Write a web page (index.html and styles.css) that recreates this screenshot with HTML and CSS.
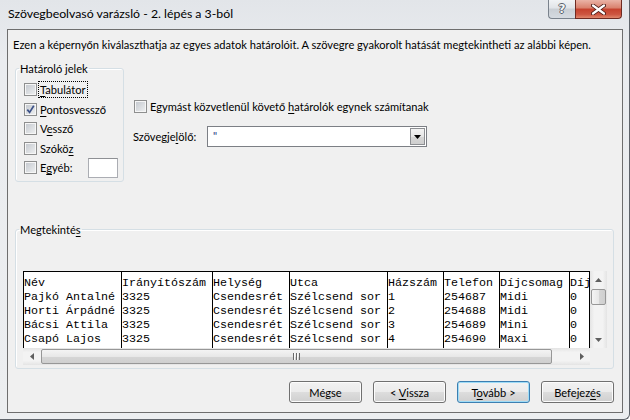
FILE: index.html
```html
<!DOCTYPE html>
<html lang="hu">
<head>
<meta charset="utf-8">
<title>Szövegbeolvasó varázsló</title>
<link rel="stylesheet" href="styles.css">
</head>
<body>
<div class="window">
  <div class="titlebar">
    <span class="title">Szövegbeolvasó varázsló - 2. lépés a 3-ból</span>
    <div class="caption">
      <div class="cap-btn help"><span class="help-glyph">?</span></div>
      <div class="cap-btn close">
        <svg width="15" height="11" viewBox="0 0 15 11"><path d="M2 1.5 L13 9.5 M13 1.5 L2 9.5" stroke="#4a1a14" stroke-width="4" stroke-linecap="round"/><path d="M2 1.5 L13 9.5 M13 1.5 L2 9.5" stroke="#ffffff" stroke-width="2.2" stroke-linecap="round"/></svg>
      </div>
    </div>
  </div>
  <div class="client">
    <p class="intro">Ezen a képernyőn kiválaszthatja az egyes adatok határolóit. A szövegre gyakorolt hatását megtekintheti az alábbi képen.</p>
    <div class="top">
      <fieldset class="group delims">
        <legend>Határoló jelek</legend>
        <div class="checks">
          <div class="check"><span class="cb"></span><span class="lbl focus"><u>T</u>abulátor</span></div>
          <div class="check"><span class="cb"><svg width="9" height="9" viewBox="0 0 9 9"><path d="M1.3 4.6 L3.6 7.4 L7.8 0.8" fill="none" stroke="#3d5288" stroke-width="1.7"/></svg></span><span class="lbl"><u>P</u>ontosvessző</span></div>
          <div class="check"><span class="cb"></span><span class="lbl">V<u>e</u>ssző</span></div>
          <div class="check"><span class="cb"></span><span class="lbl">Szókö<u>z</u></span></div>
          <div class="check"><span class="cb"></span><span class="lbl">E<u>g</u>yéb:</span><span class="textbox"></span></div>
        </div>
      </fieldset>
      <div class="options">
        <div class="check"><span class="cb"></span><span class="lbl">Egymást közvetlenül követő <u>h</u>atárolók egynek számítanak</span></div>
        <div class="qualifier">
          <span class="qlabel">Szövegje<u>l</u>ölő:</span>
          <div class="combo">
            <span class="combo-val">"</span>
            <span class="combo-btn"><svg width="7" height="4" viewBox="0 0 7 4"><path d="M0 0 H7 L3.5 4 Z" fill="#000"/></svg></span>
          </div>
        </div>
      </div>
    </div>
    <fieldset class="group preview">
      <legend>Megtekinté<u>s</u></legend>
      <div class="preview-body">
        <div class="grid">
          <div class="col w98"><div>Név</div><div>Pajkó Antalné</div><div>Horti Árpádné</div><div>Bácsi Attila</div><div>Csapó Lajos</div></div>
          <div class="col w91"><div>Irányítószám</div><div>3325</div><div>3325</div><div>3325</div><div>3325</div></div>
          <div class="col w77"><div>Helység</div><div>Csendesrét</div><div>Csendesrét</div><div>Csendesrét</div><div>Csendesrét</div></div>
          <div class="col w98"><div>Utca</div><div>Szélcsend sor</div><div>Szélcsend sor</div><div>Szélcsend sor</div><div>Szélcsend sor</div></div>
          <div class="col w56"><div>Házszám</div><div>1</div><div>2</div><div>3</div><div>4</div></div>
          <div class="col w56"><div>Telefon</div><div>254687</div><div>254688</div><div>254689</div><div>254690</div></div>
          <div class="col w70"><div>Díjcsomag</div><div>Midi</div><div>Midi</div><div>Mini</div><div>Maxi</div></div>
          <div class="col wlast"><div>Díj</div><div>0</div><div>0</div><div>0</div><div>0</div></div>
        </div>
        <div class="vscroll">
          <span class="arrow-v"><svg width="7" height="4" viewBox="0 0 7 4"><path d="M0 4 H7 L3.5 0 Z" fill="#5f5f5f"/></svg></span>
          <span class="vthumb"></span>
          <span class="vtrack"></span>
          <span class="arrow-v"><svg width="7" height="4" viewBox="0 0 7 4"><path d="M0 0 H7 L3.5 4 Z" fill="#5f5f5f"/></svg></span>
        </div>
        <div class="hscroll">
          <span class="arrow-h"><svg width="4" height="7" viewBox="0 0 4 7"><path d="M4 0 V7 L0 3.5 Z" fill="#5f5f5f"/></svg></span>
          <span class="hthumb"><span class="grip"></span></span>
          <span class="htrack"></span>
          <span class="arrow-h"><svg width="4" height="7" viewBox="0 0 4 7"><path d="M0 0 V7 L4 3.5 Z" fill="#5f5f5f"/></svg></span>
        </div>
        <div class="corner"></div>
      </div>
    </fieldset>
    <div class="buttons">
      <button class="btn">Mégse</button>
      <button class="btn">&lt; <u>V</u>issza</button>
      <button class="btn default">T<u>o</u>vább &gt;</button>
      <button class="btn">Befejez<u>é</u>s</button>
    </div>
  </div>
</div>
</body>
</html>
```

FILE: styles.css
```css
* { box-sizing: border-box; }
html, body { margin: 0; padding: 0; }
body {
  width: 630px;
  height: 420px;
  overflow: hidden;
  background: #ffffff;
  font-family: "Lato", "Noto Sans", sans-serif;
  font-size: 11.1px;
  color: #000;
}
u { text-decoration: underline; text-underline-offset: 2px; }

.window {
  width: 630px;
  height: 420px;
  display: flex;
  flex-direction: column;
  padding: 0 6px 6px 7px;
  background: linear-gradient(#e2e5e9, #eaecef 60px, #eceef0);
  border-right: 1px solid #5e636a;
  border-bottom: 1px solid #5e636a;
  border-bottom-right-radius: 6px;
}

.titlebar {
  height: 29px;
  flex: none;
  display: flex;
  justify-content: space-between;
  align-items: flex-start;
}
.title { padding: 6px 0 0 1px; line-height: 16px; font-size: 12.3px; }
.caption { display: flex; margin-right: 1px; }
.cap-btn {
  height: 19px;
  display: flex;
  align-items: center;
  justify-content: center;
}
.help {
  width: 27px;
  border: 1px solid #7a828c;
  border-top: 0;
  border-right: 0;
  border-bottom-left-radius: 4px;
  background: linear-gradient(#f1f3f5, #e1e4e8 45%, #c9ced4 50%, #d6dbe1);
}
.help-glyph {
  font-family: "DejaVu Sans", sans-serif;
  font-weight: bold;
  font-size: 12px;
  line-height: 12px;
  color: #f4f4f4;
  text-shadow: 1px 0 #59616b, -1px 0 #59616b, 0 1px #59616b, 0 -1px #59616b;
}
.close {
  width: 47px;
  border: 1px solid #6f2b22;
  border-top: 0;
  border-bottom-right-radius: 4px;
  background: linear-gradient(#eab3a6, #d9806c 45%, #c5412d 50%, #cd5641 80%, #e0876c);
}

.client {
  flex: 1;
  border: 1px solid #6e6e6e;
  background: #f0f0f0;
  display: flex;
  flex-direction: column;
}
.intro { margin: 7px 0 0 5px; line-height: 15px; white-space: nowrap; }

.top { display: flex; margin-top: 9px; }

.group {
  margin: 0 0 0 7px;
  padding: 0;
  border: 1px solid #d5dfe5;
  border-radius: 3px;
  box-shadow: inset 1px 1px 0 #fff;
  min-width: 0;
}
.group legend { padding: 0 1px; margin-left: 3px; line-height: 15px; }

.delims { width: 109px; }
.checks { padding: 3.75px 5px 3.75px 8px; display: flex; flex-direction: column; }
.check { display: flex; align-items: center; height: 19.5px; }
.cb {
  width: 13px;
  height: 13px;
  flex: none;
  border: 1px solid #8e8f8f;
  padding: 1px;
  background: linear-gradient(135deg, #c6cad0, #eceeef) content-box, #f6f6f6;
  display: flex;
  align-items: center;
  justify-content: center;
}
.lbl {
  margin-left: 1px;
  padding: 0 1px;
  border: 1px dotted transparent;
  line-height: 15px;
  white-space: nowrap;
}
.lbl.focus { border-color: #000; }
.textbox {
  margin-left: auto;
  width: 30px;
  height: 20px;
  background: #fff;
  border: 1px solid #abadb3;
  border-top-color: #8e9094;
}

.options { margin-left: 9px; padding-top: 38px; }
.options .check { height: 15px; }
.options .cb { margin-left: 1px; }
.options .lbl { margin-left: 1px; border: 0; padding: 0 0 0 2px; }
.qualifier { display: flex; align-items: center; margin-top: 12px; }
.qlabel { width: 74px; line-height: 15px; }
.combo {
  width: 220px;
  height: 21px;
  background: #fff;
  border: 1px solid #7c7f85;
  display: flex;
  align-items: stretch;
  padding: 1px;
}
.combo-val { flex: 1; padding-left: 4px; line-height: 15px; color: #1e3582; }
.combo-btn {
  width: 15px;
  border: 1px solid #8d8f93;
  background: linear-gradient(#f3f3f3, #e6e6e6 50%, #d6d6d6 51%, #cfcfcf);
  display: flex;
  align-items: center;
  justify-content: center;
}

.preview { width: 599px; margin-top: 40px; }
.preview-body {
  display: grid;
  grid-template-columns: 567px 17px;
  grid-template-rows: 77px 17px;
  margin: 34px 0 0 7px;
  padding-bottom: 3px;
}
.grid {
  display: flex;
  background: #fff;
  border-top: 1px solid #000;
  border-right: 1px solid #000;
  overflow: hidden;
  font-family: "Liberation Mono", monospace;
  font-size: 11.66px;
  line-height: 14px;
  white-space: pre;
}
.col { flex: none; border-left: 1px solid #000; padding-top: 4px; overflow: hidden; }
.w98 { width: 98px; }
.w91 { width: 91px; }
.w77 { width: 77px; }
.w56 { width: 56px; }
.w70 { width: 70px; }
.wlast { flex: 1 1 auto; min-width: 0; }

.vscroll {
  display: flex;
  flex-direction: column;
  background: linear-gradient(90deg, #e4e4e4, #f3f3f3 25%, #f3f3f3 75%, #e4e4e4);
}
.arrow-v { height: 17px; flex: none; display: flex; align-items: center; justify-content: center; }
.vthumb {
  height: 16px;
  margin: 1px 1px 0 1px;
  border: 1px solid #979797;
  border-radius: 2px;
  background: linear-gradient(90deg, #f4f4f4, #e8e8e8 50%, #d6d6d6 51%, #cfcfcf);
}
.vtrack { flex: 1; }
.hscroll {
  display: flex;
  background: linear-gradient(#e4e4e4, #f3f3f3 25%, #f3f3f3 75%, #e4e4e4);
}
.arrow-h { width: 17px; flex: none; display: flex; align-items: center; justify-content: center; }
.hthumb {
  width: 511px;
  margin: 1px 0 1px 1px;
  border: 1px solid #979797;
  border-radius: 2px;
  background: linear-gradient(#f4f4f4, #e8e8e8 50%, #d6d6d6 51%, #cfcfcf);
  display: flex;
  align-items: center;
  justify-content: center;
}
.grip {
  width: 7px;
  height: 7px;
  background: repeating-linear-gradient(90deg, #6a6a6a 0 1px, #fafafa 1px 2px, transparent 2px 3px);
}
.htrack { flex: 1; }
.corner { background: #f0f0f0; }

.buttons {
  display: flex;
  justify-content: flex-end;
  gap: 11px;
  margin-top: 12px;
  padding-right: 8px;
}
.btn {
  width: 73px;
  height: 22px;
  padding: 0;
  font-family: inherit;
  font-size: 11.1px;
  color: #000;
  border: 1px solid #707070;
  border-radius: 3px;
  background: linear-gradient(#f2f2f2, #ebebeb 50%, #dddddd 51%, #cfcfcf);
  box-shadow: inset 0 0 0 1px #fcfcfc;
}
.btn.default {
  border-color: #3c7fb1;
  box-shadow: inset 0 0 0 1px #9fdcf7;
}
```
